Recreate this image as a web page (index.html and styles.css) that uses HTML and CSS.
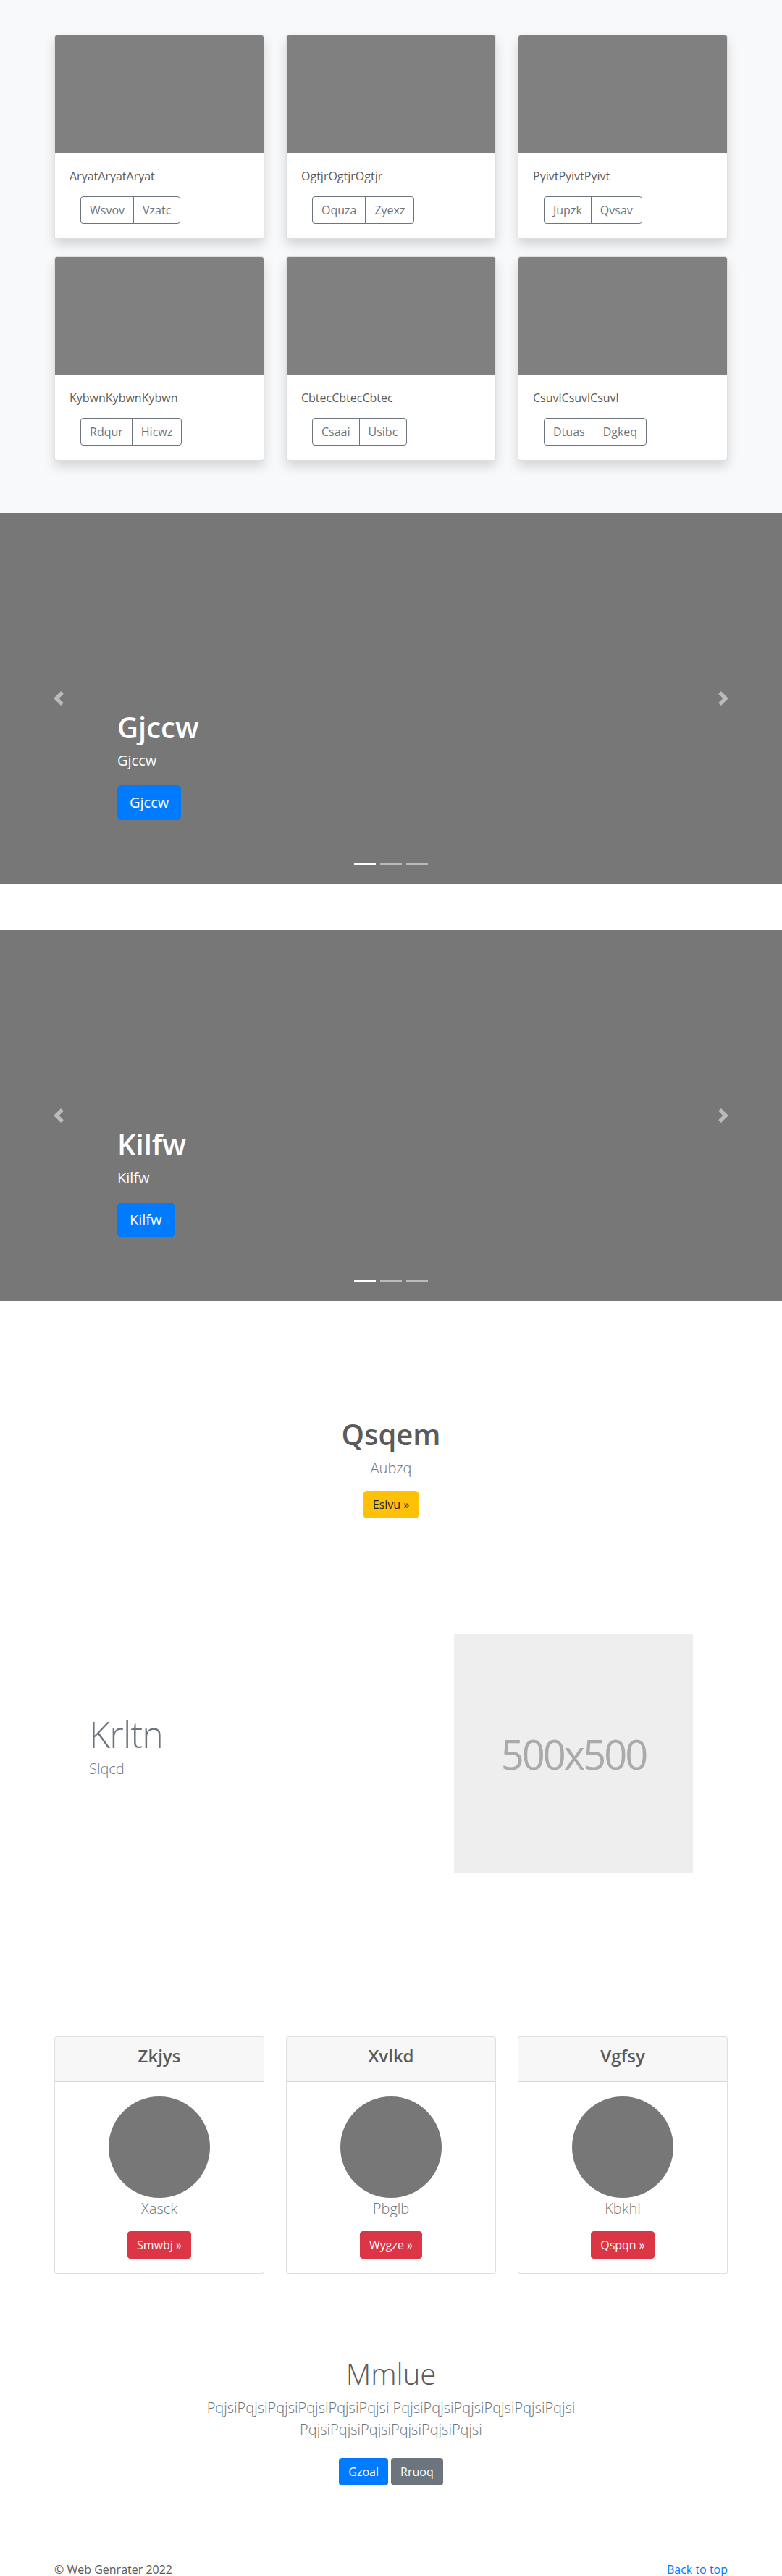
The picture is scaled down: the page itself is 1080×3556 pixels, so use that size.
FILE: index.html
```html
<!DOCTYPE html>
<html lang="en">
<head>
<meta charset="utf-8">
<title>Web Genrater</title>
<link rel="stylesheet" href="styles.css">
</head>
<body>
<main>
  <section class="album">
    <div class="container">
      <div class="card-grid">
        <div class="card">
          <div class="card-img"></div>
          <div class="card-body">
            <p class="card-text">AryatAryatAryat</p>
            <div class="btn-group"><button class="btn btn-outline">Wsvov</button><button class="btn btn-outline">Vzatc</button></div>
          </div>
        </div>
        <div class="card">
          <div class="card-img"></div>
          <div class="card-body">
            <p class="card-text">OgtjrOgtjrOgtjr</p>
            <div class="btn-group"><button class="btn btn-outline">Oquza</button><button class="btn btn-outline">Zyexz</button></div>
          </div>
        </div>
        <div class="card">
          <div class="card-img"></div>
          <div class="card-body">
            <p class="card-text">PyivtPyivtPyivt</p>
            <div class="btn-group"><button class="btn btn-outline">Jupzk</button><button class="btn btn-outline">Qvsav</button></div>
          </div>
        </div>
        <div class="card">
          <div class="card-img"></div>
          <div class="card-body">
            <p class="card-text">KybwnKybwnKybwn</p>
            <div class="btn-group"><button class="btn btn-outline">Rdqur</button><button class="btn btn-outline">Hicwz</button></div>
          </div>
        </div>
        <div class="card">
          <div class="card-img"></div>
          <div class="card-body">
            <p class="card-text">CbtecCbtecCbtec</p>
            <div class="btn-group"><button class="btn btn-outline">Csaai</button><button class="btn btn-outline">Usibc</button></div>
          </div>
        </div>
        <div class="card">
          <div class="card-img"></div>
          <div class="card-body">
            <p class="card-text">CsuvlCsuvlCsuvl</p>
            <div class="btn-group"><button class="btn btn-outline">Dtuas</button><button class="btn btn-outline">Dgkeq</button></div>
          </div>
        </div>
      </div>
    </div>
  </section>

  <section class="carousel">
    <div class="caption">
      <h1>Gjccw</h1>
      <p class="caption-text">Gjccw</p>
      <p class="caption-action"><a class="btn btn-lg btn-primary" href="#">Gjccw</a></p>
    </div>
    <a class="control control-prev" href="#"><svg width="20" height="20" viewBox="0 0 8 8"><path fill="#fff" d="M5.25 0l-4 4 4 4 1.5-1.5L4.25 4l2.5-2.5L5.25 0z"/></svg></a>
    <a class="control control-next" href="#"><svg width="20" height="20" viewBox="0 0 8 8"><path fill="#fff" d="M2.75 0l-1.5 1.5L3.75 4l-2.5 2.5L2.75 8l4-4-4-4z"/></svg></a>
    <ol class="indicators"><li class="active"></li><li></li><li></li></ol>
  </section>

  <section class="carousel">
    <div class="caption">
      <h1>Kilfw</h1>
      <p class="caption-text">Kilfw</p>
      <p class="caption-action"><a class="btn btn-lg btn-primary" href="#">Kilfw</a></p>
    </div>
    <a class="control control-prev" href="#"><svg width="20" height="20" viewBox="0 0 8 8"><path fill="#fff" d="M5.25 0l-4 4 4 4 1.5-1.5L4.25 4l2.5-2.5L5.25 0z"/></svg></a>
    <a class="control control-next" href="#"><svg width="20" height="20" viewBox="0 0 8 8"><path fill="#fff" d="M2.75 0l-1.5 1.5L3.75 4l-2.5 2.5L2.75 8l4-4-4-4z"/></svg></a>
    <ol class="indicators"><li class="active"></li><li></li><li></li></ol>
  </section>

  <section class="hero">
    <div class="container">
      <h1 class="hero-title">Qsqem</h1>
      <p class="lead muted">Aubzq</p>
      <p class="hero-action"><a class="btn btn-warning" href="#">Eslvu &raquo;</a></p>
    </div>
  </section>

  <section class="feature">
    <div class="container">
      <div class="feature-inner">
        <div class="feature-text">
          <h2 class="feature-heading">Krltn</h2>
          <p class="lead muted">Slqcd</p>
        </div>
        <div class="feature-media">
          <div class="placeholder">500x500</div>
        </div>
      </div>
    </div>
  </section>

  <hr class="divider">

  <section class="pricing">
    <div class="container">
      <div class="pricing-grid">
        <div class="p-card">
          <div class="p-card-header"><h4>Zkjys</h4></div>
          <div class="p-card-body">
            <div class="avatar"></div>
            <p class="lead muted">Xasck</p>
            <a class="btn btn-danger" href="#">Smwbj &raquo;</a>
          </div>
        </div>
        <div class="p-card">
          <div class="p-card-header"><h4>Xvlkd</h4></div>
          <div class="p-card-body">
            <div class="avatar"></div>
            <p class="lead muted">Pbglb</p>
            <a class="btn btn-danger" href="#">Wygze &raquo;</a>
          </div>
        </div>
        <div class="p-card">
          <div class="p-card-header"><h4>Vgfsy</h4></div>
          <div class="p-card-body">
            <div class="avatar"></div>
            <p class="lead muted">Kbkhl</p>
            <a class="btn btn-danger" href="#">Qspqn &raquo;</a>
          </div>
        </div>
      </div>
    </div>
  </section>

  <section class="intro">
    <div class="container narrow">
      <h1 class="intro-title">Mmlue</h1>
      <p class="lead muted">PqjsiPqjsiPqjsiPqjsiPqjsiPqjsi PqjsiPqjsiPqjsiPqjsiPqjsiPqjsi PqjsiPqjsiPqjsiPqjsiPqjsiPqjsi</p>
      <p class="intro-actions"><a class="btn btn-primary" href="#">Gzoal</a> <a class="btn btn-secondary" href="#">Rruoq</a></p>
    </div>
  </section>
</main>

<footer class="container footer">
  <p>&copy; Web Genrater 2022</p>
  <p><a href="#">Back to top</a></p>
</footer>
</body>
</html>
```

FILE: styles.css
```css
* { box-sizing: border-box; }

html, body {
  margin: 0;
  padding: 0;
}

body {
  font-family: "Open Sans", "Noto Sans", "Liberation Sans", sans-serif;
  font-size: 16px;
  line-height: 1.5;
  color: #5a5a5a;
  background: #fff;
}

a { color: #007bff; text-decoration: none; }

.container {
  max-width: 960px;
  margin: 0 auto;
  padding: 0 15px;
}

/* ---------- Buttons ---------- */
.btn {
  display: inline-block;
  font-family: inherit;
  font-size: 16px;
  font-weight: 400;
  line-height: 24px;
  padding: 6px 12px;
  border: 1px solid transparent;
  border-radius: 4px;
  text-align: center;
  vertical-align: middle;
  background: transparent;
  cursor: pointer;
}
.btn-lg {
  font-size: 20px;
  line-height: 30px;
  padding: 8px 16px;
  border-radius: 5px;
}
.btn-primary { background: #007bff; border-color: #007bff; color: #fff; }
.btn-secondary { background: #6c757d; border-color: #6c757d; color: #fff; }
.btn-warning { background: #ffc107; border-color: #ffc107; color: #212529; }
.btn-danger { background: #dc3545; border-color: #dc3545; color: #fff; }
.btn-outline { color: #6c757d; border-color: #6c757d; background: transparent; }

.btn-group { display: inline-flex; margin-left: 15px; }
.btn-group .btn:first-child { border-top-right-radius: 0; border-bottom-right-radius: 0; }
.btn-group .btn + .btn { margin-left: -1px; border-top-left-radius: 0; border-bottom-left-radius: 0; }

.lead { font-size: 20px; font-weight: 300; line-height: 30px; }
.muted { color: #6c757d; }

/* ---------- Album ---------- */
.album {
  background: #f8f9fa;
  padding: 48px 0 72px;
}
.card-grid {
  display: grid;
  grid-template-columns: repeat(3, 1fr);
  column-gap: 30px;
  row-gap: 24px;
}
.card {
  background: #fff;
  border: 1px solid rgba(0, 0, 0, .125);
  border-radius: 4px;
  overflow: hidden;
  box-shadow: 0 8px 16px rgba(0, 0, 0, .15);
}
.card-img {
  height: 162px;
  background: #808080;
}
.card-body { padding: 20px; }
.card-text { margin: 0 0 16px; }

/* ---------- Carousel ---------- */
.carousel {
  position: relative;
  height: 512px;
  background: #777;
  margin-bottom: 64px;
  overflow: hidden;
}
.caption {
  position: absolute;
  left: 15%;
  right: 15%;
  bottom: 48px;
  padding: 20px 0;
  color: #fff;
  text-align: left;
  z-index: 10;
}
.caption h1 {
  font-size: 40px;
  font-weight: 600;
  line-height: 1.2;
  margin: 0 0 8px;
}
.caption-text {
  font-size: 20px;
  line-height: 1.4;
  margin: 0 0 20px;
}
.caption-action {
  font-size: 20px;
  line-height: 1.4;
  margin: 0 0 20px;
}
.control {
  position: absolute;
  top: 0;
  bottom: 0;
  width: 15%;
  display: flex;
  align-items: center;
  justify-content: center;
  opacity: .5;
}
.control svg { display: block; }
.control-prev { left: 0; }
.control-next { right: 0; }
.indicators {
  position: absolute;
  left: 0;
  right: 0;
  bottom: 26px;
  margin: 0;
  padding: 0;
  list-style: none;
  display: flex;
  justify-content: center;
  gap: 6px;
}
.indicators li {
  width: 30px;
  height: 3px;
  background: #fff;
  opacity: .5;
}
.indicators li.active { opacity: 1; }

/* ---------- Hero ---------- */
.hero {
  padding: 96px 0;
  text-align: center;
}
.hero-title {
  font-size: 40px;
  font-weight: 600;
  line-height: 1.2;
  margin: 0 0 8px;
  color: #5a5a5a;
}
.hero .lead { margin: 0 0 16px; }
.hero-action { margin: 0; }

/* ---------- Featurette ---------- */
.feature { padding: 64px 0; }
.feature-inner {
  padding: 0 48px;
  display: grid;
  grid-template-columns: 474fr 330fr;
  column-gap: 30px;
  align-items: center;
}
.feature-heading {
  font-size: 50px;
  font-weight: 300;
  line-height: 1;
  letter-spacing: -.8px;
  color: #6c757d;
  margin: 0 0 8px;
}
.feature-text .lead { margin: 0 0 16px; }
.placeholder {
  width: 100%;
  aspect-ratio: 1 / 1;
  background: #eee;
  color: #aaa;
  display: flex;
  align-items: center;
  justify-content: center;
  font-size: 56px;
  letter-spacing: -3px;
  font-weight: 400;
}

.divider {
  margin: 80px 0;
  border: 0;
  border-top: 1px solid rgba(0, 0, 0, .1);
}

/* ---------- Pricing ---------- */
.pricing { padding-bottom: 18px; }
.pricing-grid {
  display: grid;
  grid-template-columns: repeat(3, 1fr);
  column-gap: 30px;
}
.p-card {
  border: 1px solid rgba(0, 0, 0, .125);
  border-radius: 4px;
  overflow: hidden;
  text-align: center;
  background: #fff;
}
.p-card-header {
  background: rgba(0, 0, 0, .03);
  border-bottom: 1px solid rgba(0, 0, 0, .125);
  padding: 12px 20px;
}
.p-card-header h4 {
  font-size: 24px;
  font-weight: 600;
  line-height: 1.2;
  margin: 0 0 8px;
  color: #5a5a5a;
}
.p-card-body { padding: 20px; }
.avatar {
  width: 140px;
  height: 140px;
  border-radius: 50%;
  background: #777;
  margin: 0 auto;
}
.p-card-body .lead { margin: 0 0 16px; }

/* ---------- Intro ---------- */
.intro {
  padding: 96px 0;
  text-align: center;
}
.narrow { max-width: 640px; }
.intro-title {
  font-size: 40px;
  font-weight: 300;
  line-height: 1.2;
  margin: 0 0 8px;
  color: #5a5a5a;
}
.intro .lead { margin: 0 0 16px; }
.intro-actions { margin: 0; }
.intro-actions .btn { margin: 8px 0; }

/* ---------- Footer ---------- */
.footer {
  display: flex;
  justify-content: space-between;
  padding-bottom: 48px;
}
.footer p { margin: 0 0 16px; }
```
